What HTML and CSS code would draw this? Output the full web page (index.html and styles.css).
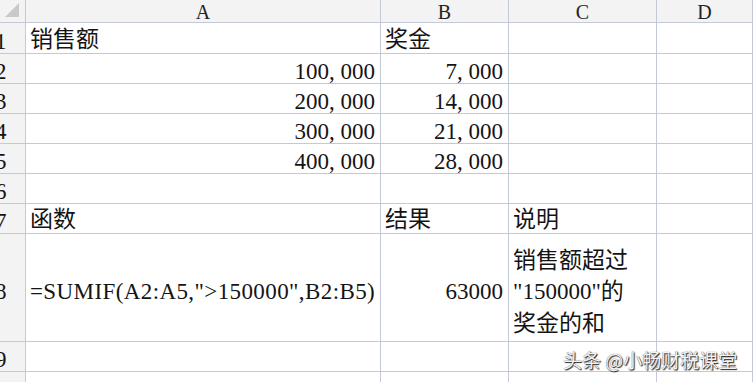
FILE: index.html
```html
<!DOCTYPE html>
<html lang="zh">
<head>
<meta charset="utf-8">
<title>SUMIF</title>
<link rel="stylesheet" href="styles.css">
</head>
<body>
<div class="sheet">
  <div class="corner"><svg width="25" height="22" viewBox="0 0 25 22"><polygon points="5,17 19,17 19,3" fill="#c9c9c9"/></svg></div>
  <div class="ch">A</div>
  <div class="ch">B</div>
  <div class="ch">C</div>
  <div class="ch">D</div>

  <div class="rh">1</div>
  <div class="c t">销售额</div>
  <div class="c t">奖金</div>
  <div class="c"></div>
  <div class="c"></div>

  <div class="rh">2</div>
  <div class="c r">100<span class="cm">,</span>000</div>
  <div class="c r">7<span class="cm">,</span>000</div>
  <div class="c"></div>
  <div class="c"></div>

  <div class="rh">3</div>
  <div class="c r">200<span class="cm">,</span>000</div>
  <div class="c r">14<span class="cm">,</span>000</div>
  <div class="c"></div>
  <div class="c"></div>

  <div class="rh">4</div>
  <div class="c r">300<span class="cm">,</span>000</div>
  <div class="c r">21<span class="cm">,</span>000</div>
  <div class="c"></div>
  <div class="c"></div>

  <div class="rh">5</div>
  <div class="c r">400<span class="cm">,</span>000</div>
  <div class="c r">28<span class="cm">,</span>000</div>
  <div class="c"></div>
  <div class="c"></div>

  <div class="rh">6</div>
  <div class="c"></div>
  <div class="c"></div>
  <div class="c"></div>
  <div class="c"></div>

  <div class="rh">7</div>
  <div class="c t">函数</div>
  <div class="c t">结果</div>
  <div class="c t">说明</div>
  <div class="c"></div>

  <div class="rh mid">8</div>
  <div class="c mid formula">=SUMIF(A2:A5,"&gt;150000",B2:B5)</div>
  <div class="c mid r">63000</div>
  <div class="c mid wrap">销售额超过<br>"150000"的<br>奖金的和</div>
  <div class="c"></div>

  <div class="rh">9</div>
  <div class="c"></div>
  <div class="c"></div>
  <div class="c"></div>
  <div class="c"></div>

  <div class="rh">10</div>
  <div class="c"></div>
  <div class="c"></div>
  <div class="c"></div>
  <div class="c"></div>
</div>
<div class="watermark">头条 @小畅财税课堂</div>
</body>
</html>
```

FILE: styles.css
```css
html, body {
  margin: 0;
  padding: 0;
  background: #ffffff;
  overflow: hidden;
}

.sheet {
  display: grid;
  grid-template-columns: 26px 355px 128px 148px 1fr;
  grid-template-rows: 23px 31px 30px 30px 30px 30px 30px 30px 108px 30px 30px;
  width: 753px;
  height: 382px;
  overflow: hidden;
  font-family: "Liberation Serif", "Noto Sans CJK SC", serif;
  font-size: 23px;
  color: #141414;
}

.sheet > div {
  box-sizing: border-box;
  border-right: 1px solid #c4c9da;
  border-bottom: 1px solid #c4c9da;
  overflow: hidden;
  white-space: nowrap;
}

.corner {
  background: #f3f3f3;
}

.corner svg {
  display: block;
}

.ch {
  background: #f3f3f3;
  display: flex;
  align-items: center;
  justify-content: center;
  font-size: 20px;
  line-height: 20px;
  padding-top: 1px;
  color: #222;
}

.rh {
  background: #f3f3f3;
  display: flex;
  align-items: flex-end;
  line-height: 20px;
  padding-bottom: 1px;
  text-indent: -5px;
}

.c {
  display: flex;
  align-items: flex-end;
  line-height: 20px;
  padding: 0 5px 1px 4px;
}

.c.t {
  padding-bottom: 3px;
}

.c.r {
  justify-content: flex-end;
}

.mid {
  align-items: center !important;
  padding-top: 9px !important;
  padding-bottom: 0 !important;
}

.c.formula {
  letter-spacing: 0.4px;
}

.c.wrap {
  white-space: normal;
  line-height: 31.5px;
  padding-left: 4px;
}

.cm {
  display: inline-block;
  width: 0.5em;
}

.watermark {
  position: absolute;
  left: 563px;
  top: 347px;
  font-family: "Noto Sans CJK SC", sans-serif;
  font-size: 19px;
  line-height: 26px;
  color: #f2f2f2;
  text-shadow: 1px 1px 1px #222, 0 0 1px #444;
  white-space: nowrap;
}
```
